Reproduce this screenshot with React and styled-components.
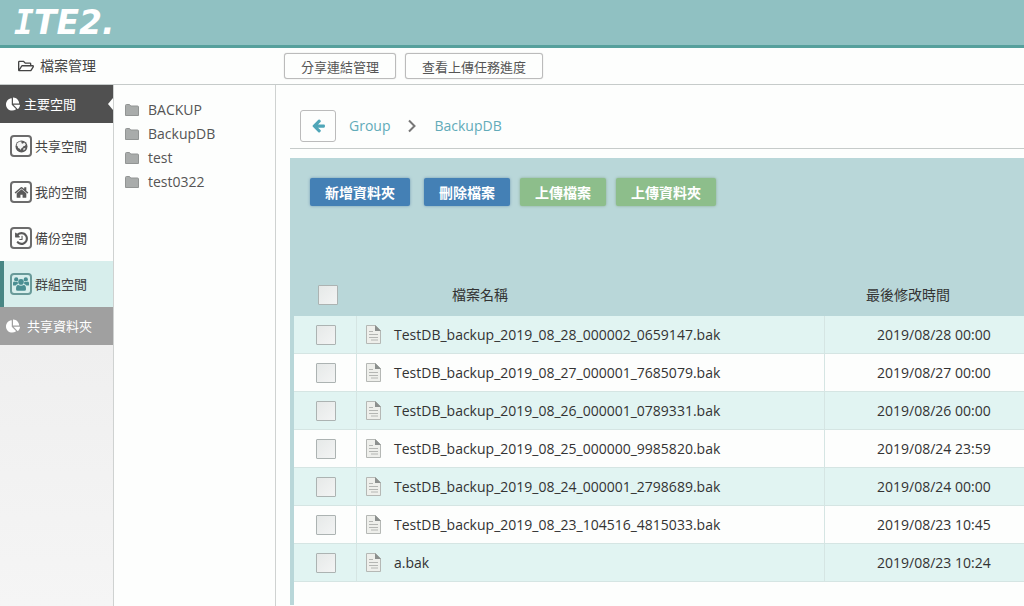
import styled, { createGlobalStyle } from "styled-components";
import { FaChartPie, FaRegFolderOpen } from "react-icons/fa";

const GlobalStyle = createGlobalStyle`
  * {
    box-sizing: border-box;
  }

  body {
    margin: 0;
    background: #fdfefd;
    color: #444;
    font-family: "Open Sans", "Noto Sans CJK TC", sans-serif;
    font-size: 14px;
    line-height: 20px;
  }

  button {
    font-family: inherit;
  }

  a {
    color: inherit;
    text-decoration: none;
  }
`;

const Page = styled.div`
  display: flex;
  flex-direction: column;
  min-height: 100vh;
`;

const Header = styled.header`
  display: flex;
  align-items: center;
  height: 48px;
  padding-left: 14px;
  background: #90c1c2;
  border-bottom: 3px solid #56a09c;
`;

const Logo = styled.a`
  && {
    color: #fff;
  }
  font: italic bold 33px/40px "DejaVu Sans", sans-serif;
`;

const LogoInitial = styled.span`
  font-family: "DejaVu Sans Mono", monospace;
`;

const Toolbar = styled.div`
  display: flex;
  align-items: center;
  height: 37px;
  border-bottom: 1px solid #c6cbca;
`;

const ToolbarTitle = styled.h1`
  display: flex;
  align-items: center;
  gap: 6px;
  width: 284px;
  margin: 0;
  padding-left: 18px;
  font-size: 14px;
  font-weight: 400;
`;

const ToolbarButtons = styled.div`
  display: flex;
  gap: 9px;
`;

const OutlineButton = styled.button`
  height: 26px;
  padding: 0 16px;
  background: #fdfefd;
  border: 1px solid #bbb;
  border-radius: 3px;
  box-shadow: 0 0 1px #bbb;
  color: #555;
  font-size: 13px;
`;

const Body = styled.div`
  display: flex;
  flex: 1;
`;

const Sidebar = styled.nav`
  flex: none;
  width: 114px;
  background: linear-gradient(#efefef, #fbfbfb);
  background-position: 0 260px;
  background-repeat: no-repeat;
  border-right: 1px solid #cfd2d1;
`;

const SectionTitle = styled.div`
  position: relative;
  display: flex;
  align-items: center;
  gap: ${(props) => (props.$sub ? "7px" : "4px")};
  height: 38px;
  padding-left: 6px;
  background: ${(props) => (props.$sub ? "#a0a0a0" : "#505050")};
  color: #fff;
  font-size: 13px;
`;

const Notch = styled.span`
  position: absolute;
  top: 13px;
  right: 0;
  border: 6px solid transparent;
  border-left-width: 0;
  border-right: 5px solid #fdfefd;
`;

const SpaceLink = styled.a`
  display: flex;
  align-items: center;
  gap: 3px;
  height: 46px;
  padding-left: ${(props) => (props.$active ? "6px" : "10px")};
  background: ${(props) => (props.$active ? "#d7eeec" : "#fdfefd")};
  border-left: ${(props) => (props.$active ? "4px solid #488684" : "none")};
  font-size: 13px;
`;

const SpaceIcon = styled.span`
  display: grid;
  place-items: center;
  width: 22px;
  height: 22px;
  border: 2px solid ${(props) => (props.$active ? "#699a99" : "#6c6c6c")};
  border-radius: 4px;
  color: ${(props) => (props.$active ? "#4a8e92" : "#5a5a5a")};
`;

const FolderTree = styled.ul`
  flex: none;
  width: 162px;
  margin: 0;
  padding: 13px 0 0 11px;
  border-right: 1px solid #cfd2d1;
  list-style: none;
`;

const Folder = styled.a`
  display: flex;
  align-items: center;
  gap: 9px;
  height: 24px;
  color: #555;
`;

const Main = styled.main`
  flex: 1;
  min-width: 0;
  padding: 25px 0 0 14px;
`;

const Breadcrumb = styled.div`
  display: flex;
  align-items: center;
  height: 39px;
  padding: 0 0 7px 10px;
  border-bottom: 1px solid #c6cbca;
  color: #62abb9;
`;

const BackButton = styled.button`
  display: grid;
  place-items: center;
  width: 36px;
  height: 32px;
  margin-right: 13px;
  padding: 0;
  background: #fdfefd;
  border: 1px solid #bbb;
  border-radius: 3px;
  color: #4fa6b8;
`;

const Separator = styled.svg`
  margin: 0 18px;
`;

const Panel = styled.section`
  margin-top: 9px;
  background: #b9d7d9;
`;

const Actions = styled.div`
  display: flex;
  gap: 10px;
  padding: 20px 20px 68px;
`;

const ActionGroup = styled.div`
  display: flex;
  gap: ${(props) => props.$gap};
`;

const ActionButton = styled.button`
  height: 28px;
  padding: 0 15px;
  background: ${(props) => (props.$green ? "#8dbe8b" : "#4480b5")};
  border: 0;
  border-radius: 2px;
  box-shadow: 0 0 3px ${(props) => (props.$green ? "#8bab95" : "#7398b4")};
  color: #fff;
  font-size: 14px;
  font-weight: 700;
`;

const TableWrap = styled.div`
  border-left: 4px solid #b9d7d9;
`;

const FileTable = styled.table`
  width: 100%;
  border-spacing: 0;
  table-layout: fixed;
  color: #333;
`;

const HeadCell = styled.th`
  width: ${(props) => props.$width || "auto"};
  height: 42px;
  padding: 0 0 0 ${(props) => props.$indent};
  font-weight: 400;
  text-align: left;
`;

const Row = styled.tr`
  background: #fdfefd;

  &:nth-child(odd) {
    background: #e1f4f2;
  }
`;

const Cell = styled.td`
  height: 38px;
  padding: 0 0 0 ${(props) => props.$indent};
  border-bottom: 1px solid #d5e5e3;
  border-right: 1px solid #d5e5e3;

  &:last-child {
    border-right: 0;
  }
`;

const FileName = styled.div`
  display: flex;
  align-items: center;
  gap: 13px;
`;

const Checkbox = styled.input`
  display: block;
  appearance: none;
  width: 20px;
  height: 20px;
  margin: 0;
  background: linear-gradient(135deg, #e6e9e8, #f3f4f4);
  border: 1px solid #acb3b2;
  border-radius: 1px;
`;

const Blank = styled.div`
  height: 23px;
  background: #fdfefd;
`;

function GlobeIcon() {
  return (
    <svg width="13" height="13" viewBox="0 0 13 13">
      <circle cx="6.5" cy="6.5" r="6" fill="currentColor" />
      <path
        d="M2.2 3.2L4.6 1.4l2.2.3-.6 1.4 1.5.6 1.5-1.1 1.6 1.6-.8 1.6-1.6.4-1 1.6-1.2.6-.4 1.6-1-1.2-1.6-.7-.6-1.9-1-.8z"
        fill="#f4f5f4"
      />
      <path d="M8.2 8.4l2.2-.6-.4 1.6-1.6 1.2z" fill="#d9dbda" />
    </svg>
  );
}

function HomeIcon() {
  return (
    <svg width="15" height="15" viewBox="0 0 1792 1792" fill="currentColor">
      <path d="M1472 992v480q0 26-19 45t-45 19h-384v-384h-256v384h-384q-26 0-45-19t-19-45v-480q0-1 .5-3t.5-3l575-474 575 474q1 2 1 6zm223-69l-62 74q-8 9-21 11h-3q-13 0-21-7l-692-577-692 577q-12 8-24 7-13-2-21-11l-62-74q-8-10-7-23.5t11-21.5l719-599q32-26 76-26t76 26l244 204v-195q0-14 9-23t23-9h192q14 0 23 9t9 23v408l219 182q10 8 11 21.5t-7 23.5z" />
    </svg>
  );
}

function HistoryIcon() {
  return (
    <svg width="15" height="15" viewBox="0 0 1792 1792" fill="currentColor">
      <path d="M1664 896q0 156-61 298t-164 245-245 164-298 61q-172 0-327-72.5t-264-204.5q-7-10-6.5-22.5t8.5-20.5l137-138q10-9 25-9 16 2 23 12 73 95 179 147t225 52q104 0 198.5-40.5t163.5-109.5 109.5-163.5 40.5-198.5-40.5-198.5-109.5-163.5-163.5-109.5-198.5-40.5q-98 0-188 35.5t-160 101.5l137 138q31 30 14 69-17 40-59 40h-448q-26 0-45-19t-19-45v-448q0-42 40-59 39-17 69 14l130 129q107-101 244.5-156.5t284.5-55.5q156 0 298 61t245 164 164 245 61 298zm-640-288v448q0 14-9 23t-23 9h-320q-14 0-23-9t-9-23v-64q0-14 9-23t23-9h224v-352q0-14 9-23t23-9h64q14 0 23 9t9 23z" />
    </svg>
  );
}

function GroupIcon() {
  return (
    <svg width="16" height="14" viewBox="0 0 16 14" fill="currentColor">
      <circle cx="3.2" cy="2.4" r="2.1" />
      <circle cx="12.8" cy="2.4" r="2.1" />
      <path d="M0 8V6q0-1.5 1.2-1.5 2 1 3.6.2Q4.6 6.600 5 7 3.400 7.200 2.600 8.600H.8Q0 8.600 0 8z" />
      <path d="M16 8V6q0-1.500-1.200-1.500-2 1-3.600.2Q11.400 6.600 11 7q1.600.2 2.400 1.600h1.800Q16 8.600 16 8z" />
      <circle cx="8" cy="4.900" r="2.800" />
      <path d="M3 12.200Q3 8 5.200 8q2.800 1.600 5.600 0Q13 8 13 12.200q0 1.600-1.600 1.600H4.600Q3 13.800 3 12.200z" />
    </svg>
  );
}

function BackIcon() {
  return (
    <svg width="15" height="15" viewBox="0 0 1792 1792" fill="currentColor">
      <path d="M1664 896v128q0 53-32.500 90.500t-84.500 37.500h-704l293 294q38 36 38 90t-38 90l-75 76q-37 37-90 37-52 0-91-37l-651-652q-37-37-37-90 0-52 37-91l651-650q38-38 91-38 52 0 90 38l75 74q38 38 38 91t-38 91l-293 293h704q52 0 84.500 37.500t32.500 90.500z" />
    </svg>
  );
}

function FolderIcon() {
  return (
    <svg width="14" height="12" viewBox="0 0 14 12">
      <path
        d="M.5 11.5V1.5q0-1 1-1h3l1.200 1.500h6.800q1 0 1 1v8.500z"
        fill="#a9acab"
        stroke="#929594"
      />
    </svg>
  );
}

function FileIcon() {
  return (
    <svg width="15" height="19" viewBox="0 0 15 19">
      <path d="M.5.5h9l5 5v13H.5z" fill="#eeefeb" stroke="#b5b8b5" />
      <path d="M9 0l6 6H9z" fill="#8c908e" />
      <path d="M3 6.500h4M3 9.500h9M3 12.500h9M5 15h7" stroke="#b4b6b3" />
    </svg>
  );
}

const spaces = [
  { name: "共享空間", icon: <GlobeIcon /> },
  { name: "我的空間", icon: <HomeIcon /> },
  { name: "備份空間", icon: <HistoryIcon /> },
  { name: "群組空間", icon: <GroupIcon />, active: true },
];

const folders = ["BACKUP", "BackupDB", "test", "test0322"];

const files = [
  { name: "TestDB_backup_2019_08_28_000002_0659147.bak", time: "2019/08/28 00:00" },
  { name: "TestDB_backup_2019_08_27_000001_7685079.bak", time: "2019/08/27 00:00" },
  { name: "TestDB_backup_2019_08_26_000001_0789331.bak", time: "2019/08/26 00:00" },
  { name: "TestDB_backup_2019_08_25_000000_9985820.bak", time: "2019/08/24 23:59" },
  { name: "TestDB_backup_2019_08_24_000001_2798689.bak", time: "2019/08/24 00:00" },
  { name: "TestDB_backup_2019_08_23_104516_4815033.bak", time: "2019/08/23 10:45" },
  { name: "a.bak", time: "2019/08/23 10:24" },
];

function FileRow({ file }) {
  return (
    <Row>
      <Cell $indent="22px">
        <Checkbox type="checkbox" aria-label={file.name} />
      </Cell>
      <Cell $indent="9px">
        <FileName>
          <FileIcon />
          {file.name}
        </FileName>
      </Cell>
      <Cell $indent="52px">{file.time}</Cell>
    </Row>
  );
}

function App() {
  return (
    <Page>
      <GlobalStyle />
      <Header>
        <Logo href="#">
          <LogoInitial>I</LogoInitial>TE2.
        </Logo>
      </Header>

      <Toolbar>
        <ToolbarTitle>
          <FaRegFolderOpen size={16} />
          檔案管理
        </ToolbarTitle>
        <ToolbarButtons>
          <OutlineButton>分享連結管理</OutlineButton>
          <OutlineButton>查看上傳任務進度</OutlineButton>
        </ToolbarButtons>
      </Toolbar>

      <Body>
        <Sidebar>
          <SectionTitle>
            <FaChartPie size={14} />
            主要空間
            <Notch />
          </SectionTitle>
          {spaces.map((space) => (
            <SpaceLink href="#" key={space.name} $active={space.active}>
              <SpaceIcon $active={space.active}>{space.icon}</SpaceIcon>
              {space.name}
            </SpaceLink>
          ))}
          <SectionTitle $sub>
            <FaChartPie size={14} />
            共享資料夾
          </SectionTitle>
        </Sidebar>

        <FolderTree>
          {folders.map((folder) => (
            <li key={folder}>
              <Folder href="#">
                <FolderIcon />
                {folder}
              </Folder>
            </li>
          ))}
        </FolderTree>

        <Main>
          <Breadcrumb>
            <BackButton aria-label="Back">
              <BackIcon />
            </BackButton>
            <a href="#">Group</a>
            <Separator width="8" height="14" viewBox="0 0 8 14">
              <path d="M1 1.500l5.500 5.500L1 12.500" fill="none" stroke="#777" strokeWidth="2" />
            </Separator>
            <a href="#">BackupDB</a>
          </Breadcrumb>

          <Panel>
            <Actions>
              <ActionGroup $gap="14px">
                <ActionButton>新增資料夾</ActionButton>
                <ActionButton>刪除檔案</ActionButton>
              </ActionGroup>
              <ActionGroup $gap="10px">
                <ActionButton $green>上傳檔案</ActionButton>
                <ActionButton $green>上傳資料夾</ActionButton>
              </ActionGroup>
            </Actions>
            <TableWrap>
              <FileTable>
                <thead>
                  <tr>
                    <HeadCell $width="63px" $indent="24px">
                      <Checkbox type="checkbox" aria-label="全選" />
                    </HeadCell>
                    <HeadCell $indent="95px">檔案名稱</HeadCell>
                    <HeadCell $width="199px" $indent="41px">
                      最後修改時間
                    </HeadCell>
                  </tr>
                </thead>
                <tbody>
                  {files.map((file) => (
                    <FileRow key={file.name} file={file} />
                  ))}
                </tbody>
              </FileTable>
              <Blank />
            </TableWrap>
          </Panel>
        </Main>
      </Body>
    </Page>
  );
}

export default App;
